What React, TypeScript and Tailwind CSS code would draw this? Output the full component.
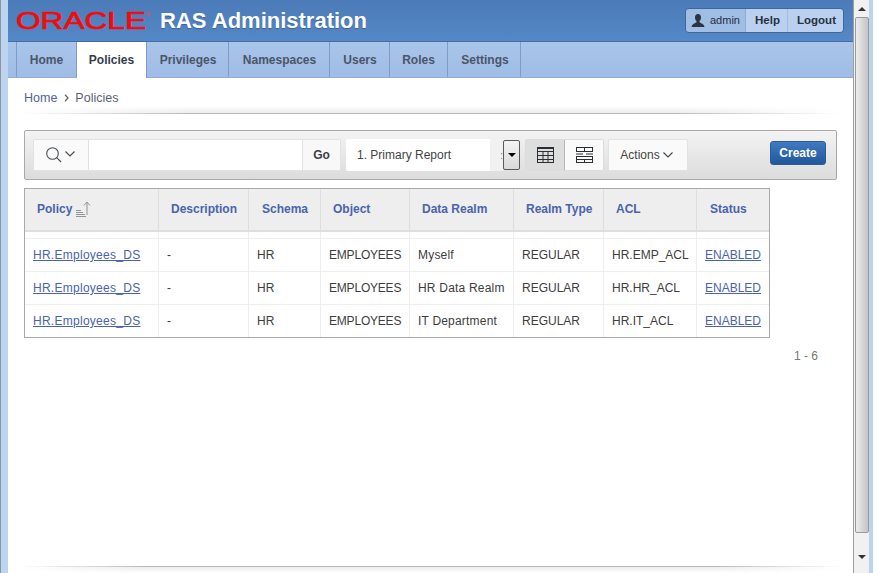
const tabs = [
  { label: "Home", w: "w-[60px]" },
  { label: "Policies", w: "w-[70px]", active: true },
  { label: "Privileges", w: "w-[82px] pl-[1px]" },
  { label: "Namespaces", w: "w-[101px] pl-[1px]" },
  { label: "Users", w: "w-[60px] pl-[1px]" },
  { label: "Roles", w: "w-[58px]" },
  { label: "Settings", w: "w-[73px] pl-[2px]" },
];

const columns = [
  { label: "Policy", w: "w-[134px]", pl: "pl-[12px]" },
  { label: "Description", w: "w-[90px]", pl: "pl-[12px]" },
  { label: "Schema", w: "w-[72px]", pl: "pl-[13px]" },
  { label: "Object", w: "w-[89px]", pl: "pl-[12px]" },
  { label: "Data Realm", w: "w-[104px]", pl: "pl-[12px]" },
  { label: "Realm Type", w: "w-[90px]", pl: "pl-[12px]" },
  { label: "ACL", w: "w-[93px]", pl: "pl-[12px]" },
  { label: "Status", w: "w-[72px]", pl: "pl-[13px]" },
];

// per-column nudges so the text widths line up with the original
const cellTracking = ["tracking-[0.27px]", "", "", "tracking-[-0.2px]", "tracking-[0.2px]", "", "", ""];

const rows = [
  { realm: "Myself", acl: "HR.EMP_ACL" },
  { realm: "HR Data Realm", acl: "HR.HR_ACL" },
  { realm: "IT Department", acl: "HR.IT_ACL" },
];

function OracleLogo() {
  return (
    <svg width="136" height="24" viewBox="0 0 136 24" className="shrink-0">
      <text
        x="0"
        y="20"
        fontFamily="'Liberation Sans', Arial, sans-serif"
        fontSize="23"
        fontWeight="400"
        fill="#f50a0a"
        stroke="#f50a0a"
        strokeWidth="0.7"
        textLength="130"
        lengthAdjust="spacingAndGlyphs"
      >
        ORACLE
      </text>
      <circle cx="133" cy="5" r="1.6" fill="#d9565a" />
    </svg>
  );
}

function UserIcon() {
  return (
    <svg width="14" height="13" viewBox="0 0 14 13">
      <path d="M7 0c2 0 3 1.400 3 3.400 0 1.600-.7 3-1.500 3.700v1.200C10 9.300 13 10 13.500 13H.5C1 10 4 9.300 5.500 8.300V7.100C4.700 6.400 4 5 4 3.400 4 1.400 5 0 7 0z" fill="#2b3442" />
    </svg>
  );
}

function SearchIcon() {
  return (
    <svg width="30" height="16" viewBox="0 0 30 16" fill="none" stroke="#4a4f55">
      <circle cx="6.500" cy="6.500" r="5.800" strokeWidth="1.100" />
      <path d="M10.700 10.700L15 15" strokeWidth="1.200" />
      <path d="M19.500 4.500l4.500 4.500 4.500-4.500" strokeWidth="1.200" />
    </svg>
  );
}

function SortIcon() {
  return (
    <svg width="15" height="16" viewBox="0 0 15 16" fill="none" stroke="#8f949b">
      <path d="M0 15.500h10M0 13.500h9M0 11.500h7M0 9.500h5" strokeWidth="1" />
      <path d="M11 14V1M8 4.500L11 1l3 3.500" strokeWidth="1" />
    </svg>
  );
}

function ReportIcon() {
  return (
    <svg width="17" height="16" viewBox="0 0 17 16" fill="none" stroke="#2b2f34">
      <rect x="0.500" y="0.500" width="16" height="15" />
      <path d="M0 1.500h17M0 4.500h17M0 8.500h17M0 12.500h17M6 4.500v11M11 4.500v11" />
    </svg>
  );
}

function DetailIcon() {
  return (
    <svg width="17" height="16" viewBox="0 0 17 16" fill="none" stroke="#2b2f34">
      <rect x="0.500" y="0.500" width="16" height="4" />
      <rect x="0.500" y="9.500" width="16" height="6" />
      <path d="M0 7h7M10 7h7M0 12.500h17M8.500 0.500v4M8.500 12.500v3" />
    </svg>
  );
}

function Scrollbar() {
  return (
    <div className="flex h-full w-[16px] shrink-0 flex-col items-center border-l border-[#a0a0a0] bg-[#f1f1f1]">
      <div className="flex h-[17px] w-full items-center justify-center">
        <div className="h-0 w-0 border-x-[4px] border-b-[4px] border-x-transparent border-b-[#333]" />
      </div>
      <div className="h-[516px] w-[14px] rounded-[2px] border border-[#9a9a9a] bg-gradient-to-r from-[#ededed] via-[#d8d8d8] to-[#c4c4c4]" />
      <div className="flex flex-1 items-center justify-center pt-[8px]">
        <div className="h-0 w-0 border-x-[4px] border-t-[4px] border-x-transparent border-t-[#333]" />
      </div>
    </div>
  );
}

export default function App() {
  return (
    <div className="flex h-[573px] w-[873px] overflow-hidden bg-white font-['Liberation_Sans',Arial,sans-serif] text-[12px]">
      <div className="w-[8px] shrink-0 border-l border-[#8a96a3] bg-[#bcd4ee]" />

      <div className="flex h-full w-[845px] shrink-0 flex-col">
        {/* Header */}
        <header className="flex h-[42px] shrink-0 items-center border-b border-[#3f6ea8] bg-gradient-to-b from-[#4b7bb8] to-[#5588c7] pl-[8px] pr-[9px]">
          <OracleLogo />
          <span className="ml-[8px] text-[22px] font-bold leading-none text-white [text-shadow:0_1px_1px_rgba(0,0,0,0.25)]">
            RAS Administration
          </span>
          <div className="ml-auto flex h-[25px] overflow-hidden rounded-[4px] border border-[#3d679f] text-[11.500px] text-[#26303f]">
            <div className="flex w-[60px] items-center gap-[5px] border-r border-[#8dabd4] bg-[#a0bde4] pl-[5px] text-[11px]">
              <UserIcon />
              <span>admin</span>
            </div>
            <div className="flex w-[42px] items-center justify-center border-r border-[#a3bde0] bg-[#bbd0ee] pl-[2px] font-bold">
              Help
            </div>
            <div className="flex w-[55px] items-center justify-center bg-[#bbd0ee] pl-[2px] font-bold">
              Logout
            </div>
          </div>
        </header>

        {/* Tabs */}
        <nav className="flex h-[36px] shrink-0 border-b border-[#8fadd6] bg-gradient-to-b from-[#aac5e9] to-[#9ebce5] pl-[8px]">
          <div className="flex border-l border-[#7f9cc6]">
            {tabs.map((tab) => (
              <div
                key={tab.label}
                className={`flex ${tab.w} items-center justify-center border-r border-[#7f9cc6] text-[12px] font-bold ${
                  tab.active ? "-mb-px bg-white text-[#333d4d]" : "text-[#4a5568]"
                }`}
              >
                {tab.label}
              </div>
            ))}
          </div>
        </nav>

        {/* Breadcrumb */}
        <div className="flex h-[28px] shrink-0 items-center gap-[6px] pl-[16px] pt-[12px] text-[12.500px] text-[#5a6272]">
          <span className="text-[#4f6596]">Home</span>
          <svg width="5" height="8" viewBox="0 0 5 8" fill="none" stroke="#666" strokeWidth="1.300" className="ml-[1px]">
            <path d="M1 .8L4 4 1 7.200" />
          </svg>
          <span>Policies</span>
        </div>
        <div className="mx-[12px] h-[8px] shrink-0 border-b border-[#bcbcbc] bg-gradient-to-b from-transparent to-[#ececec] [mask-image:linear-gradient(to_right,transparent,black_20%,black_80%,transparent)]" />

        {/* Toolbar */}
        <div className="ml-[16px] mt-[16px] flex h-[50px] w-[813px] shrink-0 items-center rounded-[2px] border border-[#a9a9a9] bg-gradient-to-b from-[#f3f3f3] to-[#dcdcdc] pl-[8px]">
          <div className="flex h-[32px] w-[308px] rounded-[2px] border border-[#e2e2e2] bg-white">
            <div className="flex w-[55px] items-center justify-center border-r border-[#e2e2e2] bg-[#fafafa]">
              <SearchIcon />
            </div>
            <div className="flex-1" />
            <div className="flex w-[38px] items-center justify-center border-l border-[#e2e2e2] bg-[#f8f8f8] font-bold text-[#3b3f45]">
              Go
            </div>
          </div>
          <div className="ml-[5px] flex h-[32px] w-[157px] items-center rounded-[2px] bg-white">
            <span className="w-[144px] pl-[11px] text-[#444]">1. Primary Report</span>
            <div className="flex h-full flex-1 items-center justify-end overflow-hidden bg-[#f1f1f1] text-[10px] text-[#777]">:</div>
          </div>
          <div className="flex h-[30px] w-[17px] items-center justify-center rounded-[2px] border border-[#5a5a5a] bg-gradient-to-b from-[#f4f4f4] to-[#d9d9d9]">
            <div className="h-0 w-0 border-x-[4px] border-t-[4px] border-x-transparent border-t-black" />
          </div>
          <div className="ml-[5px] flex h-[32px] w-[79px] overflow-hidden rounded-[2px] border border-[#dcdcdc]">
            <div className="flex w-[39px] items-center justify-center border-r border-[#b5b5b5] bg-[#dedede]">
              <ReportIcon />
            </div>
            <div className="flex flex-1 items-center justify-center bg-[#fafafa]">
              <DetailIcon />
            </div>
          </div>
          <div className="ml-[4px] flex h-[32px] w-[80px] items-center justify-center gap-[3px] rounded-[2px] border border-[#e2e2e2] bg-[#fafafa] pr-[3px] text-[#444]">
            Actions
            <svg width="10" height="6" viewBox="0 0 10 6" fill="none" stroke="#444" strokeWidth="1.100">
              <path d="M.5.500L5 5 9.500.500" />
            </svg>
          </div>
          <div className="mb-[4px] ml-[82px] flex h-[24px] w-[56px] items-center justify-center rounded-[3px] border border-[#2a5c9b] bg-gradient-to-b from-[#417ac0] to-[#21579b] font-bold text-white">
            Create
          </div>
        </div>

        {/* Report */}
        <table className="ml-[16px] mt-[8px] w-[746px] shrink-0 table-fixed border-separate border-spacing-0 border border-[#a9a9a9]">
          <thead>
            <tr>
              {columns.map((col, i) => (
                <th
                  key={col.label}
                  className={`${col.w} ${col.pl} h-[43px] border-b-2 border-[#dedede] bg-[#eeeeee] pb-[2px] text-left font-bold text-[#4a63ad] ${
                    i < columns.length - 1 ? "border-r" : ""
                  }`}
                >
                  <span className="inline-flex items-center gap-[4px]">
                    {col.label}
                    {i === 0 && <SortIcon />}
                  </span>
                </th>
              ))}
            </tr>
            <tr>
              {columns.map((col, i) => (
                <th
                  key={col.label}
                  className={`h-[7px] border-b border-[#eeeeee] p-0 ${i < columns.length - 1 ? "border-r" : ""}`}
                />
              ))}
            </tr>
          </thead>
          <tbody className="text-[#3d3d3d]">
            {rows.map((row, r) => {
              const cells = ["HR.Employees_DS", "-", "HR", "EMPLOYEES", row.realm, "REGULAR", row.acl, "ENABLED"];
              const last = r === rows.length - 1;
              return (
                <tr key={row.realm}>
                  {cells.map((cell, i) => (
                    <td
                      key={i}
                      className={`whitespace-nowrap border-[#eeeeee] pl-[8px] ${cellTracking[i]} ${
                        i < cells.length - 1 ? "border-r" : ""
                      } ${last ? "h-[32px]" : "h-[33px] border-b"}`}
                    >
                      {i === 0 || i === 7 ? (
                        <a href="#" className="text-[#4a63ad] underline">
                          {cell}
                        </a>
                      ) : (
                        cell
                      )}
                    </td>
                  ))}
                </tr>
              );
            })}
          </tbody>
        </table>

        <div className="ml-[786px] mt-[9px] shrink-0 text-[#777]">1 - 6</div>

        {/* Footer */}
        <div className="mx-[10px] mt-auto h-[7px] shrink-0 border-t border-[#bcbcbc] bg-gradient-to-b from-[#ececec] to-white [mask-image:linear-gradient(to_right,transparent,black_15%,black_85%,transparent)]" />
      </div>

      <Scrollbar />
      <div className="w-[4px] shrink-0 bg-[#bcd4ee]" />
    </div>
  );
}
